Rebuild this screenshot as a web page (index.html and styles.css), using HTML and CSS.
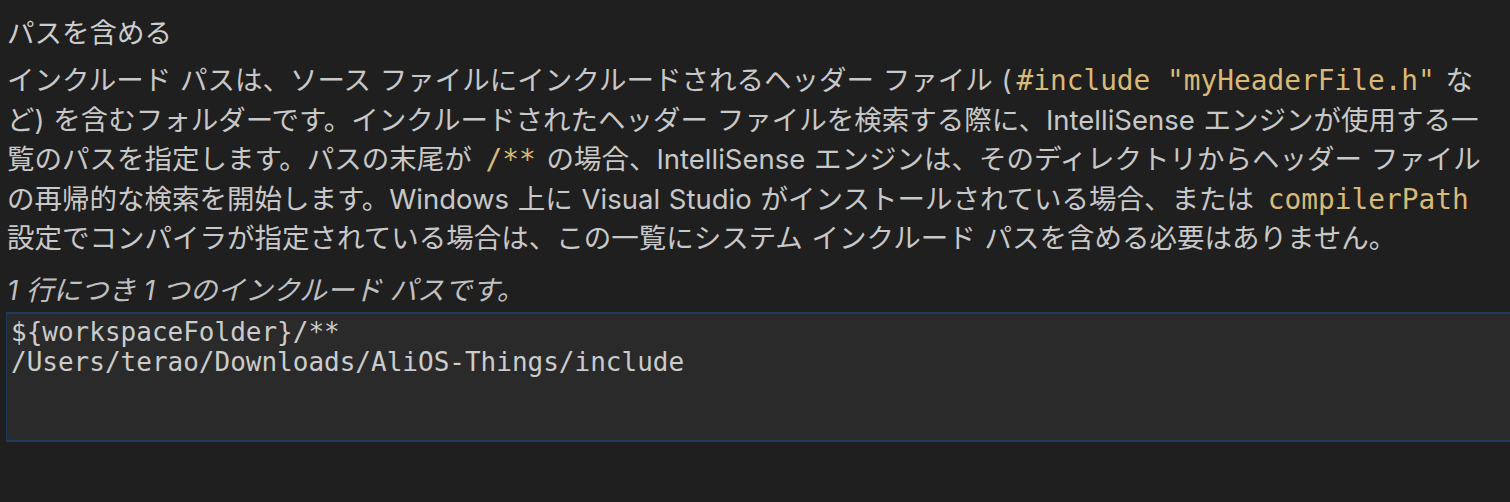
FILE: index.html
```html
<!DOCTYPE html>
<html lang="ja">
<head>
<meta charset="utf-8">
<link rel="stylesheet" href="styles.css">
</head>
<body>
<div class="setting">
  <div class="title">パスを含める</div>
  <div class="desc">インクルード パスは、ソース ファイルにインクルードされるヘッダー ファイル (<code>#include "myHeaderFile.h"</code> など) を含むフォルダーです。インクルードされたヘッダー ファイルを検索する際に、IntelliSense エンジンが使用する一覧のパスを指定します。パスの末尾が <code>/**</code> の場合、IntelliSense エンジンは、そのディレクトリからヘッダー ファイルの再帰的な検索を開始します。Windows 上に Visual Studio がインストールされている場合、または <code>compilerPath</code> 設定でコンパイラが指定されている場合は、この一覧にシステム インクルード パスを含める必要はありません。</div>
  <div class="hint">1 行につき 1 つのインクルード パスです。</div>
  <div class="editor">
    <div class="line">${workspaceFolder}/**</div>
    <div class="line">/Users/terao/Downloads/AliOS-Things/include</div>
  </div>
</div>
</body>
</html>
```
FILE: styles.css
```css
html, body {
  margin: 0;
  padding: 0;
  background: #1f1f1f;
  width: 1510px;
  height: 502px;
  overflow: hidden;
}
.setting {
  padding: 13px 0 0 7px;
  font-family: Inter, "Noto Sans CJK JP", sans-serif;
  font-size: 27.5px;
  color: #cccccc;
}
.title {
  line-height: 40px;
}
.desc {
  margin-top: 8px;
  line-height: 39.6px;
  width: 1490px;
  color: #c8c8c8;
  word-spacing: 1px;
}
.desc code {
  font-family: "DejaVu Sans Mono", monospace;
  font-size: 27.8px;
  color: #d9b977;
  word-spacing: 0;
  padding: 0 2px 0 5px;
}
.hint {
  margin-top: 11px;
  line-height: 40px;
  font-style: italic;
  color: #c0c0c0;
}
.editor {
  margin-top: 2px;
  margin-left: -1px;
  height: 123px;
  background: #2a2a2a;
  border-top: 2px solid #1f3a5c;
  border-bottom: 2px solid #1f3a5c;
  border-left: 1px solid #1f3a5c;
  padding: 3px 0 0 4px;
  font-family: "DejaVu Sans Mono", monospace;
  font-size: 26px;
  color: #cccccc;
}
.line {
  line-height: 30px;
  white-space: pre;
}
```
